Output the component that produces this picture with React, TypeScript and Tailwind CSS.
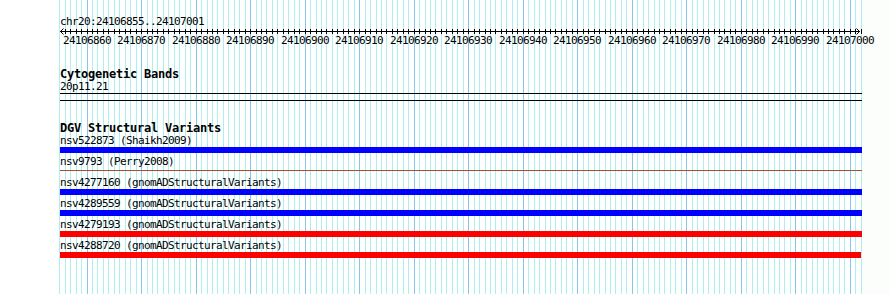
import React from "react";

const START = 24106855;
const BASES = 147;
const X0 = 59.3; // page x of first base
const STEP = 5.452;

const variants = [
  { id: "nsv522873", source: "Shaikh2009", kind: "bar", color: "bg-[#0000ff]", width: "w-[802px]" },
  { id: "nsv9793", source: "Perry2008", kind: "line", color: "bg-[#a0522d]", width: "w-[802px]" },
  { id: "nsv4277160", source: "gnomADStructuralVariants", kind: "bar", color: "bg-[#0000ff]", width: "w-[802px]" },
  { id: "nsv4289559", source: "gnomADStructuralVariants", kind: "bar", color: "bg-[#0000ff]", width: "w-[802px]" },
  { id: "nsv4279193", source: "gnomADStructuralVariants", kind: "bar", color: "bg-[#ff0000]", width: "w-[802px]" },
  { id: "nsv4288720", source: "gnomADStructuralVariants", kind: "bar", color: "bg-[#ff0000]", width: "w-[801px]" },
];

function Grid() {
  const lines = [];
  for (let k = 0; k <= BASES; k++) {
    const x = Math.round(X0 + k * STEP) + 0.5;
    const major = (START + k) % 10 === 0;
    lines.push(
      <line key={k} x1={x} x2={x} y1={0} y2={294} stroke={major ? "#87c6ea" : "#afeeee"} strokeWidth={1} />
    );
  }
  return (
    <svg className="absolute left-0 top-0" width={890} height={294}>
      {lines}
    </svg>
  );
}

function Ruler() {
  const ticks = [];
  for (let k = 0; k <= BASES; k++) {
    const x = Math.round(X0 + k * STEP) - 60 + 0.5;
    ticks.push(<line key={k} x1={x} x2={x} y1={1} y2={6} stroke="#000" strokeWidth={1} />);
  }
  const labels = [];
  for (let b = 24106860; b <= 24107000; b += 10) {
    const center = X0 + (b - START) * STEP - 60;
    labels.push(
      <span
        key={b}
        className="absolute top-[7px] text-[11px] leading-[12px] tracking-[-0.62px] whitespace-nowrap"
        style={{ left: Math.round(center - 24) }}
      >
        {b}
      </span>
    );
  }
  return (
    <div className="relative h-[20px]">
      <svg width={802} height={8} className="block">
        <line x1={0} x2={800} y1={3.5} y2={3.5} stroke="#000" strokeWidth={1} />
        {ticks}
        <polyline points="3.5,0.5 0.5,3.5 3.5,6.5" fill="none" stroke="#000" strokeWidth={1} />
        <polyline points="796.5,0.5 799.5,3.5 796.5,6.5" fill="none" stroke="#000" strokeWidth={1} />
      </svg>
      {labels}
    </div>
  );
}

export default function App() {
  return (
    <div className="relative w-[890px] h-[294px] overflow-hidden bg-[#fbfefb] font-['DejaVu_Sans_Mono',monospace] text-black">
      <div className="absolute left-0 top-0 w-[862px] h-[294px] bg-white" />
      <Grid />
      <div className="relative pl-[60px] w-[862px] pt-[16px]">
        <div className="text-[11px] leading-[12px] tracking-[-0.62px]">chr20:24106855..24107001</div>
        <Ruler />

        <div className="mt-[20px] text-[12px] font-bold leading-[13px] tracking-[-0.22px]">Cytogenetic Bands</div>
        <div className="text-[11px] leading-[12px] tracking-[-0.62px]">20p11.21</div>
        <div className="h-[1px] w-[802px] bg-black" />
        <div className="mt-[6px] h-[1px] w-[802px] bg-black" />

        <div className="mt-[21px] text-[12px] font-bold leading-[13px] tracking-[-0.22px]">DGV Structural Variants</div>
        <div className="flex flex-col">
          {variants.map((v) => (
            <div key={v.id} className="flex flex-col pb-[3px]">
              <div className="text-[11px] leading-[12px] tracking-[-0.62px] whitespace-nowrap">
                {v.id} ({v.source})
              </div>
              {v.kind === "bar" ? (
                <div className={`h-[6px] ${v.width} ${v.color}`} />
              ) : (
                <div className="h-[6px] pt-[2px]">
                  <div className={`h-[1px] ${v.width} ${v.color}`} />
                </div>
              )}
            </div>
          ))}
        </div>
      </div>
    </div>
  );
}
